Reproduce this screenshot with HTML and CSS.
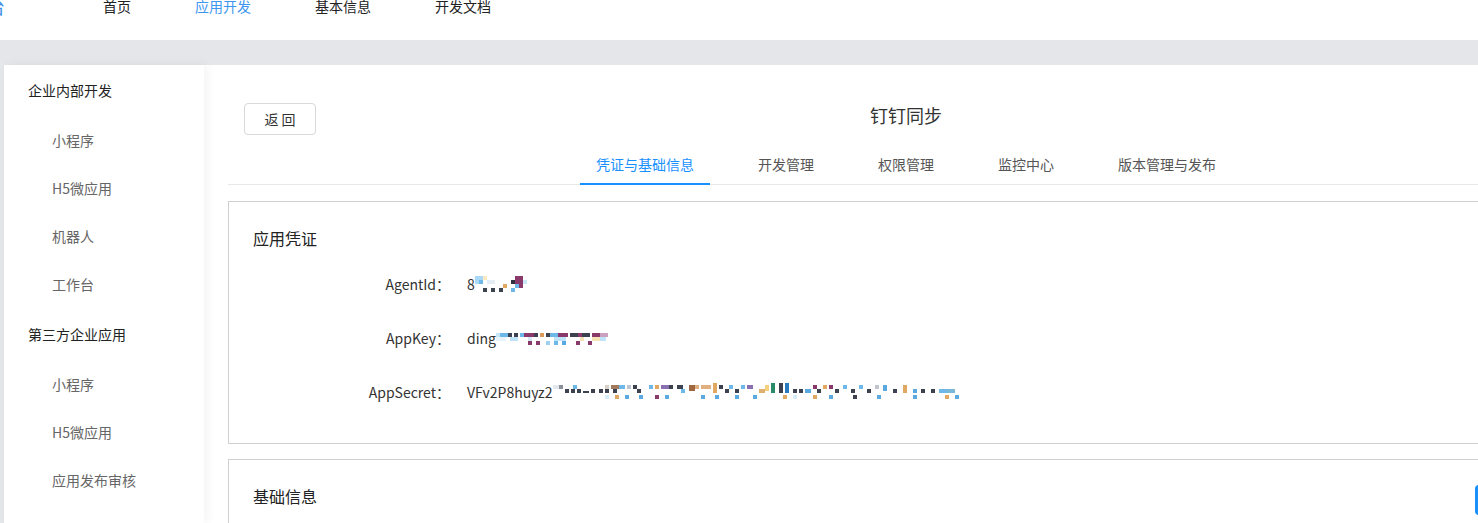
FILE: index.html
```html
<!DOCTYPE html>
<html lang="zh-CN">
<head>
    <meta charset="UTF-8">
    <title>钉钉同步 - 应用开发</title>
    <link rel="stylesheet" href="styles.css">
</head>
<body>
    <header class="topbar">
        <div class="logo">开放平台</div>
        <nav class="nav">
            <a class="nav-item">首页</a>
            <a class="nav-item active">应用开发</a>
            <a class="nav-item">基本信息</a>
            <a class="nav-item">开发文档</a>
        </nav>
    </header>

    <div class="layout">
        <aside class="sidebar">
            <div class="menu-group">企业内部开发</div>
            <div class="menu-item">小程序</div>
            <div class="menu-item">H5微应用</div>
            <div class="menu-item">机器人</div>
            <div class="menu-item">工作台</div>
            <div class="menu-group">第三方企业应用</div>
            <div class="menu-item">小程序</div>
            <div class="menu-item">H5微应用</div>
            <div class="menu-item">应用发布审核</div>
        </aside>

        <main class="content">
            <div class="page-head">
                <div class="page-head-left"><button class="btn-back">返 回</button></div>
                <h2 class="page-title">钉钉同步</h2>
                <div></div>
            </div>

            <div class="tabs">
                <div class="tab active">凭证与基础信息</div>
                <div class="tab">开发管理</div>
                <div class="tab">权限管理</div>
                <div class="tab">监控中心</div>
                <div class="tab">版本管理与发布</div>
            </div>

            <section class="card">
                <h3 class="card-title">应用凭证</h3>
                <div class="field">
                    <span class="field-label">AgentId：</span>
                    <span class="field-value">8<svg class="mosaic" width="64" height="16" viewBox="0 0 64 16">
                        <rect x="0" y="0" width="8" height="8" fill="#a9d9f6"/>
                        <rect x="4" y="4" width="4" height="4" fill="#6db7e9"/>
                        <rect x="8" y="0" width="4" height="4" fill="#fbe9c2"/>
                        <rect x="12" y="4" width="8" height="4" fill="#e3edf5"/>
                        <rect x="8" y="12" width="4" height="4" fill="#3c4250"/>
                        <rect x="16" y="12" width="4" height="4" fill="#3c4250"/>
                        <rect x="24" y="12" width="4" height="4" fill="#3c4250"/>
                        <rect x="28" y="8" width="4" height="4" fill="#e0a860"/>
                        <rect x="36" y="4" width="4" height="4" fill="#2d3140"/>
                        <rect x="40" y="0" width="8" height="8" fill="#8a3a6a"/>
                        <rect x="44" y="8" width="4" height="4" fill="#8a3a6a"/>
                        <rect x="40" y="8" width="4" height="4" fill="#6db7e9"/>
                        <rect x="36" y="12" width="4" height="4" fill="#6db7e9"/>
                        <rect x="48" y="4" width="4" height="4" fill="#c9e6f7"/>
                    </svg></span>
                </div>
                <div class="field">
                    <span class="field-label">AppKey：</span>
                    <span class="field-value">ding<svg class="mosaic" width="118" height="18" viewBox="0 0 118 18">
                        <rect x="0" y="4" width="4" height="4" fill="#c9e6f7"/>
                        <rect x="4" y="4" width="8" height="4" fill="#6db7e9"/>
                        <rect x="12" y="4" width="4" height="4" fill="#3c4250"/>
                        <rect x="18" y="4" width="4" height="4" fill="#3c4250"/>
                        <rect x="24" y="4" width="4" height="4" fill="#6db7e9"/>
                        <rect x="28" y="4" width="10" height="4" fill="#8a3a6a"/>
                        <rect x="38" y="4" width="4" height="4" fill="#3c4250"/>
                        <rect x="44" y="4" width="4" height="4" fill="#d99a55"/>
                        <rect x="50" y="4" width="4" height="4" fill="#3c4250"/>
                        <rect x="54" y="4" width="8" height="4" fill="#6db7e9"/>
                        <rect x="62" y="4" width="10" height="4" fill="#8a3a6a"/>
                        <rect x="74" y="4" width="8" height="4" fill="#3c4250"/>
                        <rect x="82" y="4" width="4" height="4" fill="#8a3a6a"/>
                        <rect x="86" y="4" width="8" height="4" fill="#3c4250"/>
                        <rect x="96" y="4" width="8" height="4" fill="#8a3a6a"/>
                        <rect x="104" y="4" width="8" height="4" fill="#c9a0c0"/>
                        <rect x="0" y="8" width="10" height="4" fill="#e9f3fa"/>
                        <rect x="14" y="8" width="8" height="4" fill="#bfe3f8"/>
                        <rect x="32" y="8" width="4" height="4" fill="#d6e8f3"/>
                        <rect x="58" y="8" width="12" height="4" fill="#bfe3f8"/>
                        <rect x="84" y="8" width="4" height="4" fill="#f5e2b5"/>
                        <rect x="96" y="8" width="8" height="4" fill="#f5e2b5"/>
                        <rect x="104" y="8" width="6" height="4" fill="#bfe3f8"/>
                        <rect x="32" y="12" width="4" height="4" fill="#8a3a6a"/>
                        <rect x="40" y="12" width="4" height="4" fill="#8a3a6a"/>
                        <rect x="50" y="12" width="4" height="4" fill="#9fd0f0"/>
                        <rect x="58" y="12" width="4" height="4" fill="#6db7e9"/>
                        <rect x="66" y="12" width="4" height="4" fill="#5aa9e0"/>
                        <rect x="80" y="12" width="4" height="4" fill="#8a3a6a"/>
                        <rect x="92" y="12" width="4" height="4" fill="#8a3a6a"/>
                    </svg></span>
                </div>
                <div class="field">
                    <span class="field-label">AppSecret：</span>
                    <span class="field-value">VFv2P8huyz2<svg class="mosaic" width="425" height="18" viewBox="0 0 425 18">
                        <rect x="0" y="2" width="6" height="4" fill="#e3e7ee"/>
                        <rect x="6" y="2" width="4" height="4" fill="#8a8f99"/>
                        <rect x="12" y="6" width="4" height="4" fill="#3c4250"/>
                        <rect x="18" y="6" width="4" height="4" fill="#3c4250"/>
                        <rect x="20" y="2" width="4" height="4" fill="#6db7e9"/>
                        <rect x="24" y="6" width="4" height="4" fill="#3c4250"/>
                        <rect x="30" y="8" width="6" height="2" fill="#3c4250"/>
                        <rect x="38" y="6" width="4" height="4" fill="#3c4250"/>
                        <rect x="46" y="6" width="4" height="4" fill="#3c4250"/>
                        <rect x="52" y="2" width="4" height="4" fill="#d9d0c8"/>
                        <rect x="52" y="6" width="4" height="4" fill="#3c4250"/>
                        <rect x="58" y="2" width="8" height="4" fill="#a07a5a"/>
                        <rect x="60" y="6" width="4" height="4" fill="#3c4250"/>
                        <rect x="66" y="2" width="6" height="4" fill="#6db7e9"/>
                        <rect x="74" y="2" width="4" height="4" fill="#c0c4cc"/>
                        <rect x="80" y="2" width="4" height="4" fill="#3c4250"/>
                        <rect x="84" y="6" width="4" height="4" fill="#3c4250"/>
                        <rect x="96" y="2" width="4" height="4" fill="#6db7e9"/>
                        <rect x="102" y="2" width="4" height="4" fill="#e0a860"/>
                        <rect x="108" y="2" width="8" height="4" fill="#8a70b0"/>
                        <rect x="116" y="2" width="4" height="4" fill="#3c4250"/>
                        <rect x="124" y="2" width="6" height="4" fill="#3c4250"/>
                        <rect x="128" y="6" width="4" height="4" fill="#6db7e9"/>
                        <rect x="136" y="2" width="6" height="6" fill="#a06840"/>
                        <rect x="142" y="2" width="4" height="4" fill="#e0b080"/>
                        <rect x="148" y="2" width="10" height="4" fill="#e0b080"/>
                        <rect x="160" y="0" width="4" height="10" fill="#e0a860"/>
                        <rect x="166" y="2" width="4" height="4" fill="#3c4250"/>
                        <rect x="172" y="6" width="4" height="4" fill="#3c4250"/>
                        <rect x="176" y="2" width="4" height="4" fill="#6db7e9"/>
                        <rect x="182" y="6" width="4" height="4" fill="#3c4250"/>
                        <rect x="188" y="2" width="4" height="4" fill="#6db7e9"/>
                        <rect x="194" y="2" width="6" height="4" fill="#8a70b0"/>
                        <rect x="206" y="6" width="6" height="4" fill="#e0b070"/>
                        <rect x="212" y="2" width="4" height="6" fill="#f5d080"/>
                        <rect x="218" y="0" width="4" height="10" fill="#2a8a6a"/>
                        <rect x="226" y="0" width="4" height="10" fill="#3c4250"/>
                        <rect x="232" y="0" width="4" height="10" fill="#2a7ac0"/>
                        <rect x="240" y="6" width="4" height="4" fill="#3c4250"/>
                        <rect x="246" y="6" width="4" height="4" fill="#3c4250"/>
                        <rect x="252" y="6" width="6" height="4" fill="#5aa9e0"/>
                        <rect x="260" y="2" width="4" height="4" fill="#8a3a6a"/>
                        <rect x="264" y="6" width="4" height="4" fill="#3c4250"/>
                        <rect x="270" y="2" width="4" height="4" fill="#e0a860"/>
                        <rect x="276" y="2" width="4" height="4" fill="#8a3a6a"/>
                        <rect x="282" y="6" width="4" height="4" fill="#3c4250"/>
                        <rect x="290" y="2" width="4" height="4" fill="#6db7e9"/>
                        <rect x="298" y="6" width="4" height="4" fill="#3c4250"/>
                        <rect x="306" y="2" width="4" height="4" fill="#6db7e9"/>
                        <rect x="314" y="6" width="4" height="4" fill="#3c4250"/>
                        <rect x="322" y="2" width="4" height="4" fill="#c0c4cc"/>
                        <rect x="330" y="2" width="4" height="6" fill="#5aa9e0"/>
                        <rect x="340" y="6" width="4" height="4" fill="#3c4250"/>
                        <rect x="350" y="2" width="4" height="8" fill="#e0a860"/>
                        <rect x="360" y="6" width="4" height="4" fill="#5aa9e0"/>
                        <rect x="368" y="6" width="4" height="4" fill="#3c4250"/>
                        <rect x="378" y="6" width="4" height="4" fill="#3c4250"/>
                        <rect x="386" y="6" width="8" height="4" fill="#6db7e9"/>
                        <rect x="394" y="6" width="8" height="4" fill="#7ab8d8"/>
                        <rect x="52" y="12" width="4" height="4" fill="#d6ecf9"/>
                        <rect x="62" y="12" width="4" height="4" fill="#e0a860"/>
                        <rect x="72" y="12" width="4" height="4" fill="#5aa9e0"/>
                        <rect x="86" y="12" width="4" height="4" fill="#5aa9e0"/>
                        <rect x="102" y="12" width="4" height="4" fill="#8a3a6a"/>
                        <rect x="112" y="12" width="4" height="4" fill="#5aa9e0"/>
                        <rect x="148" y="12" width="4" height="4" fill="#5aa9e0"/>
                        <rect x="162" y="12" width="4" height="4" fill="#5aa9e0"/>
                        <rect x="182" y="12" width="4" height="4" fill="#5aa9e0"/>
                        <rect x="200" y="12" width="4" height="4" fill="#5aa9e0"/>
                        <rect x="230" y="12" width="4" height="4" fill="#e0a860"/>
                        <rect x="240" y="12" width="4" height="4" fill="#d6ecf9"/>
                        <rect x="260" y="12" width="4" height="4" fill="#e0a860"/>
                        <rect x="276" y="12" width="4" height="4" fill="#5aa9e0"/>
                        <rect x="300" y="12" width="4" height="4" fill="#3c4250"/>
                        <rect x="324" y="12" width="4" height="4" fill="#5aa9e0"/>
                        <rect x="360" y="12" width="4" height="4" fill="#5aa9e0"/>
                        <rect x="392" y="12" width="4" height="4" fill="#e0a860"/>
                        <rect x="402" y="12" width="4" height="4" fill="#5aa9e0"/>
                    </svg></span>
                </div>
            </section>

            <section class="card">
                <div class="card-head">
                    <h3 class="card-title">基础信息</h3>
                    <button class="btn-primary">修改</button>
                </div>
            </section>
        </main>
    </div>
</body>
</html>
```

FILE: styles.css
```css
html, body {
    margin: 0;
    padding: 0;
    overflow: hidden;
    background-color: #e5e6ea;
    font-family: "Noto Sans CJK SC", sans-serif;
    font-size: 14px;
    color: #333;
}

.topbar {
    display: flex;
    align-items: flex-start;
    height: 40px;
    background-color: #fff;
    overflow: hidden;
}

.logo {
    margin-left: -67px;
    margin-top: -6px;
    font-size: 18px;
    line-height: 24px;
    color: #3a8ee6;
}

.nav {
    display: flex;
    margin-left: 66px;
    margin-top: -4px;
}

.nav-item {
    padding: 0 32px;
    line-height: 20px;
    color: #222;
}

.nav-item.active {
    color: #3d97f0;
}

.layout {
    display: flex;
    padding: 25px 0 0 4px;
    height: 458px;
}

.sidebar {
    flex: none;
    width: 200px;
    background-color: #fff;
    box-shadow: 3px 0 10px rgba(0, 0, 0, 0.05);
    position: relative;
    z-index: 1;
}

.menu-group {
    height: 52px;
    line-height: 50px;
    padding-left: 24px;
    color: #222;
}

.menu-item {
    height: 48px;
    line-height: 46px;
    padding-left: 48px;
    color: #666;
}

.content {
    flex: none;
    width: 1356px;
    padding: 36px 0 0 24px;
    background-color: #fff;
}

.page-head {
    display: grid;
    grid-template-columns: 1fr auto 1fr;
    align-items: start;
}

.page-head-left {
    padding-left: 16px;
}

.btn-back {
    display: block;
    margin-top: 2px;
    width: 72px;
    height: 32px;
    background-color: #fff;
    border: 1px solid #d9d9d9;
    border-radius: 4px;
    font-family: inherit;
    font-size: 14px;
    color: #333;
    cursor: pointer;
}

.page-title {
    margin: 0;
    font-size: 18px;
    font-weight: normal;
    line-height: 28px;
    color: #333;
}

.tabs {
    display: flex;
    justify-content: center;
    margin-top: 6px;
    border-bottom: 1px solid #e8e8e8;
}

.tab {
    position: relative;
    padding: 12px 16px 9px;
    margin-right: 32px;
    line-height: 22px;
    color: #555;
}

.tab:last-child {
    margin-right: 0;
}

.tab.active {
    color: #1890ff;
}

.tab.active::after {
    content: "";
    position: absolute;
    left: 0;
    right: 0;
    bottom: -1px;
    height: 2px;
    background-color: #1890ff;
}

.card {
    margin-top: 16px;
    padding: 24px 24px 24px;
    border: 1px solid #d0d0d0;
}

.card + .card {
    margin-top: 15px;
}

.card-title {
    margin: 0;
    font-size: 16px;
    font-weight: normal;
    line-height: 24px;
    color: #222;
}

.card-head {
    display: flex;
    justify-content: space-between;
    align-items: flex-start;
}

.btn-primary {
    margin-top: 1px;
    width: 84px;
    height: 30px;
    border: none;
    border-radius: 4px;
    background-color: #1890ff;
    color: #fff;
    font-family: inherit;
}

.card-title + .field {
    margin-top: 7px;
}

.field {
    display: flex;
    align-items: center;
    height: 54px;
}

.field-label {
    width: 197px;
    text-align: right;
    color: #333;
}

.field-value {
    display: flex;
    align-items: center;
    margin-left: 17px;
    color: #333;
}

.mosaic {
    display: block;
}
```
